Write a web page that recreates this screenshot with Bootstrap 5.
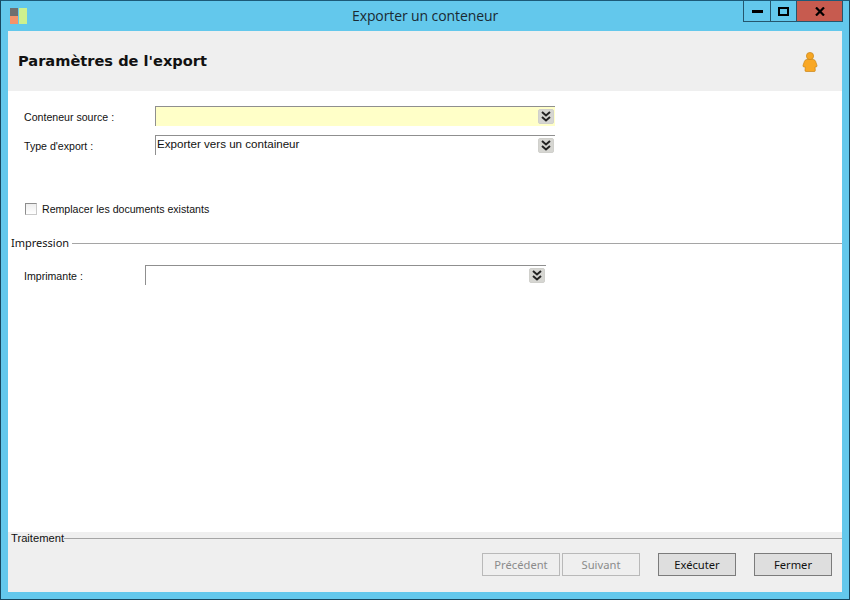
<!DOCTYPE html>
<html lang="fr">
<head>
<meta charset="utf-8">
<title>Exporter un conteneur</title>
<link href="https://cdn.jsdelivr.net/npm/bootstrap@5.3.0/dist/css/bootstrap.min.css" rel="stylesheet">
<style>
html,body{height:100%;}
body{background:#63c8ec;font-family:"Liberation Sans",Arial,sans-serif;font-size:10.6px;color:#111;line-height:1.2;overflow:hidden;}
.win-frame{width:850px;height:600px;border:1px solid #17475f;border-top-color:#1c5a78;background:#63c8ec;padding:0 7px 7px 7px;}
.win-bar{height:30px;margin:0 -6px 0 -6px;display:grid;grid-template-columns:1fr auto 1fr;align-items:start;}
.win-logo{margin:7px 0 0 8px;display:block;}
.win-title{font-size:14px;color:#1a2a33;line-height:20px;padding-top:5px;font-family:"Open Sans","Noto Sans",sans-serif;letter-spacing:-.1px;}
.win-ctrls{justify-self:end;display:flex;height:21px;border:1px solid #25566d;border-top:0;margin-right:5px;}
.win-ctrls>div{display:flex;align-items:center;justify-content:center;height:100%;}
.ctl-min{width:27px;border-right:1px solid #25566d;}
.ctl-max{width:26px;border-right:1px solid #25566d;}
.ctl-close{width:45px;background:#c75b4f;}
.client{flex:1 1 auto;background:#fff;min-height:0;}
.head-band{height:60px;background:#efefef;padding:0 24px 0 10px;}
.head-title{font-family:"DejaVu Sans","Noto Sans",sans-serif;font-weight:700;font-size:14.6px;color:#111;margin:0;}
.head-icon{margin-top:2px;}
.form-zone{flex:1 1 auto;padding-top:15px;}
.form-line{height:20px;margin-bottom:9px;padding-left:16px;}
.lbl-a{width:131px;flex:none;padding-top:2px;}
.lbl-b{width:121px;flex:none;padding-top:2px;}
.combo{height:20px;width:400px;border-top:1px solid #8f8f8f;border-left:1px solid #8f8f8f;padding:2px 0 0 1px;position:relative;font-size:11.6px;line-height:12px;}
.combo-req{background:#ffffc8;}
.combo-wide{width:401px;}
.arrow-btn{position:absolute;right:1px;top:2px;width:16px;height:15px;background:#d6d6d2;border:1px solid #d0d0cc;border-radius:2px;display:flex;align-items:center;justify-content:center;}
.chk-line{margin-top:46px;padding-left:17px;height:16px;}
.chk-box{width:12px;height:12px;border:1px solid #8d8d8d;background:linear-gradient(#eee,#fff);border-right-color:#c9c9c9;border-bottom-color:#c9c9c9;flex:none;margin-right:5px;}
.sect-line{margin-top:19px;height:14px;padding-left:3px;}
.sect-name{font-family:"Noto Sans",sans-serif;font-size:11px;}
.sect-rule{flex:1 1 auto;height:1px;background:#a5a5a5;margin-left:3px;}
.print-line{margin-top:15px;}
.foot-band{height:60px;background:#efefef;padding-left:3px;flex:none;}
.foot-head{height:13px;}
.foot-head span:first-child{font-size:11.2px;padding-top:1px;}
.foot-rule{flex:1 1 auto;height:1px;background:#a5a5a5;}
.foot-btns{padding:8px 10px 0 0;}
.act-btn{width:78px;height:23px;padding:0;border:1px solid #7b7b7b;background:#dedede;border-radius:0;font-family:"Noto Sans",sans-serif;font-size:11.2px;line-height:20px;color:#111;}
.act-btn:disabled{border-color:#b9b9b9;background:#efefef;color:#8b8b8b;opacity:1;}
.gap-two{margin-left:2px;}
.gap-big{margin-left:18px;}
</style>
</head>
<body class="m-0">
<div class="win-frame d-flex flex-column">
  <div class="win-bar">
    <svg class="win-logo" width="17" height="17" viewBox="0 0 17 17"><rect x="0" y="0" width="8" height="8" fill="#6f6f6f"/><rect x="0" y="8" width="8" height="8" fill="#f4936a"/><rect x="9" y="0" width="8" height="16" fill="#cdf08e"/></svg>
    <div class="win-title">Exporter un conteneur</div>
    <div class="win-ctrls">
      <div class="ctl-min"><svg width="11" height="4" viewBox="0 0 11 4"><rect width="11" height="3" y="1" fill="#000"/></svg></div>
      <div class="ctl-max"><svg width="11" height="9" viewBox="0 0 11 9"><rect x="1" y="1" width="9" height="7" fill="none" stroke="#000" stroke-width="2"/></svg></div>
      <div class="ctl-close"><svg width="10" height="9" viewBox="0 0 10 9"><path d="M1 .5 9 8.5M9 .5 1 8.5" stroke="#000" stroke-width="2.2" fill="none"/></svg></div>
    </div>
  </div>
  <div class="client d-flex flex-column">
    <div class="head-band d-flex align-items-center justify-content-between">
      <h1 class="head-title">Paramètres de l'export</h1>
      <svg class="head-icon" width="16" height="20" viewBox="0 0 16 20"><circle cx="8" cy="4" r="3.600" fill="#f6a623" stroke="#c98518" stroke-width=".7"/><path d="M5 7.500h6c1.500 0 2.500 1 3 3l1 3c.2 1-.5 1.500-1.500 1.500L13 15l.3 3.400c0 .8-.4 1.100-1 1.100H4c-.7 0-1-.4-1-1.100L3.300 15 2.500 15C1.500 15 .8 14.500 1 13.500l1-3c.5-2 1.500-3 3-3z" fill="#f9a825" stroke="#c98518" stroke-width=".7"/></svg>
    </div>
    <div class="form-zone">
      <div class="form-line d-flex align-items-center">
        <label class="lbl-a">Conteneur source :</label>
        <div class="combo combo-req"><span class="arrow-btn"><svg width="10" height="11" viewBox="0 0 10 11"><path d="M1 1 5 4.500 9 1M1 6 5 9.500 9 6" fill="none" stroke="#222" stroke-width="2"/></svg></span></div>
      </div>
      <div class="form-line d-flex align-items-center">
        <label class="lbl-a">Type d'export :</label>
        <div class="combo">Exporter vers un containeur<span class="arrow-btn"><svg width="10" height="11" viewBox="0 0 10 11"><path d="M1 1 5 4.500 9 1M1 6 5 9.500 9 6" fill="none" stroke="#222" stroke-width="2"/></svg></span></div>
      </div>
      <div class="chk-line d-flex align-items-center">
        <span class="chk-box"></span><span>Remplacer les documents existants</span>
      </div>
      <div class="sect-line d-flex align-items-center">
        <span class="sect-name">Impression</span><span class="sect-rule"></span>
      </div>
      <div class="form-line print-line d-flex align-items-center">
        <label class="lbl-b">Imprimante :</label>
        <div class="combo combo-wide"><span class="arrow-btn"><svg width="10" height="11" viewBox="0 0 10 11"><path d="M1 1 5 4.500 9 1M1 6 5 9.500 9 6" fill="none" stroke="#222" stroke-width="2"/></svg></span></div>
      </div>
    </div>
    <div class="foot-band">
      <div class="foot-head d-flex align-items-center"><span>Traitement</span><span class="foot-rule"></span></div>
      <div class="foot-btns d-flex justify-content-end">
        <button type="button" class="btn act-btn" disabled>Précédent</button>
        <button type="button" class="btn act-btn gap-two" disabled>Suivant</button>
        <button type="button" class="btn act-btn gap-big">Exécuter</button>
        <button type="button" class="btn act-btn gap-big">Fermer</button>
      </div>
    </div>
  </div>
</div>
<script src="https://cdn.jsdelivr.net/npm/bootstrap@5.3.0/dist/js/bootstrap.bundle.min.js"></script>
</body>
</html>
